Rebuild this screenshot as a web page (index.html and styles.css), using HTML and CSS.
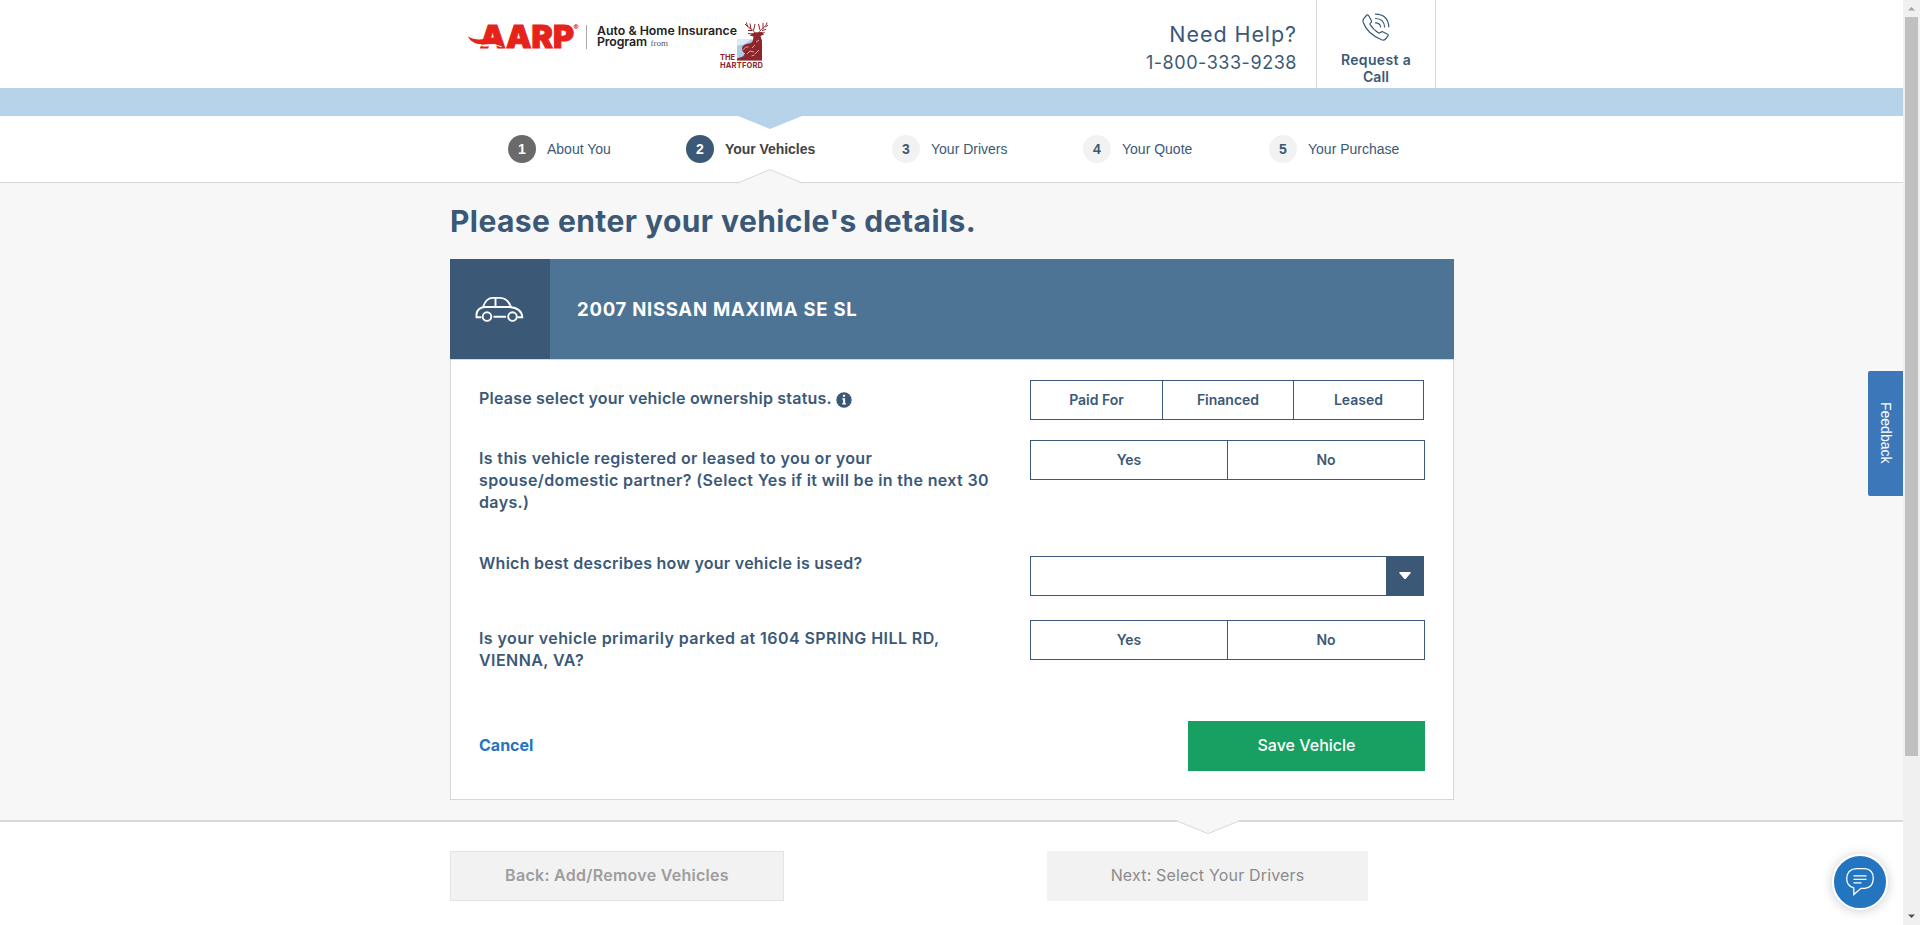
FILE: index.html
```html
<!DOCTYPE html>
<html lang="en">
<head>
<meta charset="utf-8">
<title>Your Vehicles</title>
<link rel="stylesheet" href="styles.css">
</head>
<body>
<div class="window">
  <div class="page">
    <header class="header">
      <svg class="logo" width="304" height="60" viewBox="0 0 304 60" aria-label="AARP Auto and Home Insurance Program from The Hartford">
        <text class="logo-aarp" x="12" y="32.500" textLength="94" lengthAdjust="spacingAndGlyphs">AARP</text>
        <path fill="#e6231a" d="M0 21.500C5 24.500 11 25.200 17 23.800L31 21.500L36 29.500C27 27.500 21 28 14 29C7 29.500 2 26 0 21.500Z"/>
        <path fill="#fff" d="M11 30C18 29.900 26 27.600 34 31.600L33 32.300C27 29.300 21 31.600 15 31.500Z"/>
        <circle cx="108" cy="11.500" r="2" fill="none" stroke="#e6231a" stroke-width=".7"/>
        <text class="logo-reg" x="106.800" y="12.800">R</text>
        <path stroke="#a8a8a8" d="M118.500 10v24"/>
        <text class="logo-name" x="129" y="19.700" textLength="140">Auto &amp; Home Insurance</text>
        <text class="logo-name" x="129" y="31" textLength="50">Program</text>
        <text class="logo-from" x="182.500" y="31" textLength="17.500">from</text>
        <text class="logo-hartford" x="252" y="45" textLength="15">THE</text>
        <text class="logo-hartford" x="252" y="52.500" textLength="43">HARTFORD</text>
        <path fill="#a9cde6" d="M269 24.500h25v21h-25z"/>
        <path fill="#dcebf5" d="M269 24.500h14l-7 5-7 1z"/>
        <path fill="#90262c" d="M269 43.500l6-2 2-3C273 36 273 31 277 29.500C281 28 284 29 285 25L285.500 21.500L281.500 20.500L286 17.500L294 17L296 19.500L292.500 21L294 26V45.500H269Z"/>
        <path fill="none" stroke="#e8c9c6" stroke-width=".8" d="M275.500 35c1-3 3-3 5-3M279 39l3-3 4 1M284 33l3-3M287 39l4-4M288 27l3-2M283.500 41l3-1"/>
        <path fill="none" stroke="#90262c" stroke-width="1" d="M287 18C285 13.500 279 14 278.500 7.500M280.500 12.500L277 9M283 14.500L282 8.500M285.500 15.500L287 9M291 18C292 14 298 13 299 7.500M297.500 12L300 10M295 14L295 8M292 15L290.500 9M284 15.500L280 15.500M294 15.500L298 14.500M285 19L280 18.500M293 18.500L296.500 17.500"/>
      </svg>
      <div class="help">
        <div class="help-title">Need Help?</div>
        <div class="help-phone">1-800-333-9238</div>
      </div>
      <div class="callback">
        <svg width="28" height="28" viewBox="0 0 28 28" fill="none" stroke="#3b5977" stroke-width="1.200" stroke-linejoin="round" stroke-linecap="round">
          <path d="M1.200 6.300L4.800 2Q6 1.600 6.800 3L9.300 7.500Q10 8.500 9 9.500L7.800 11Q11 16.500 17 20.200L19.500 18.900Q20.300 18.500 21.200 19L25.500 21.300Q26.700 22 25.800 23.200L23.500 26Q22 27.800 19.500 26.800Q5 20.500 1.300 9.500Q.8 7.500 1.200 6.300Z"/>
          <path d="M13.500 1.200Q26 1.500 26.800 13.800M13.500 5.500Q22 5.700 22.600 14M13.500 9.800Q18.200 9.800 18.600 14"/>
        </svg>
        <div class="callback-label">Request a<br><span>Call</span></div>
      </div>
    </header>
    <div class="band"></div>
    <nav class="steps">
      <div class="step step-1"><b class="dot done">1</b><span>About You</span></div>
      <div class="step step-2"><b class="dot current">2</b><strong>Your Vehicles</strong></div>
      <div class="step step-3"><b class="dot">3</b><span>Your Drivers</span></div>
      <div class="step step-4"><b class="dot">4</b><span>Your Quote</span></div>
      <div class="step step-5"><b class="dot">5</b><span>Your Purchase</span></div>
      <svg class="notch notch-top" width="64" height="13" viewBox="0 0 64 13"><path fill="#b7d3e9" d="M0 0H64L32 13Z"/></svg>
      <svg class="notch notch-nav" width="66" height="15" viewBox="0 0 66 15"><path fill="#f7f7f7" d="M1 15V14L33 .7L65 14V15Z"/><path fill="none" stroke="#d8d8d8" d="M0 14.200L1.500 13.700L33 .6L64.500 13.700L66 14.200"/></svg>
    </nav>
    <main class="main">
      <h1 class="title">Please enter your vehicle's details.</h1>
      <section class="card">
        <div class="card-head">
          <div class="card-icon">
            <svg width="50" height="26" viewBox="0 0 50 26" fill="none" stroke="#fff" stroke-width="1.900">
              <path d="M6.500 21.200H1.500V18Q2.500 11.500 10 11H34.500Q46.500 12 47.300 21.200H42.500M18.500 20.800H31"/>
              <path d="M8 11Q11 1.900 18 1.900H25Q32.500 2 36 11M20.500 2V11"/>
              <circle cx="12" cy="20.600" r="4.300"/><circle cx="37.500" cy="20.600" r="4.300"/>
            </svg>
          </div>
          <h2 class="card-title">2007 NISSAN MAXIMA SE SL</h2>
        </div>
        <div class="card-body">
          <div class="row row-owner">
            <div class="label tight">Please select your vehicle ownership status.<svg class="info" width="16" height="16" viewBox="0 0 16 16"><circle cx="8" cy="8" r="7.700" fill="#3b5977"/><path fill="#fff" d="M6.900 2.800h2.200v2H6.900zM6.200 6.300h2.900v5h.9v1.200H6.200v-1.200h.9V7.500h-.9z"/></svg></div>
            <div class="choices three"><button>Paid For</button><button>Financed</button><button>Leased</button></div>
          </div>
          <div class="row row-registered">
            <div class="label">Is this vehicle registered or leased to you or your<br>spouse/domestic partner? (Select Yes if it will be in the next 30<br>days.)</div>
            <div class="choices two"><button>Yes</button><button>No</button></div>
          </div>
          <div class="row row-usage">
            <div class="label usage">Which best describes how your vehicle is used?</div>
            <div class="select"><span class="arrow"><svg width="12" height="7" viewBox="0 0 12 7"><path fill="#fff" d="M1 0H11Q12.500 0 11.500 1.300L7 6.400Q6 7.400 5 6.400L.5 1.300Q-.5 0 1 0Z"/></svg></span></div>
          </div>
          <div class="row row-parked">
            <div class="label parked">Is your vehicle primarily parked at 1604 SPRING HILL RD,<br>VIENNA, VA?</div>
            <div class="choices two"><button>Yes</button><button>No</button></div>
          </div>
          <div class="actions"><a class="cancel">Cancel</a><button class="save">Save Vehicle</button></div>
        </div>
      </section>
    </main>
    <footer class="footer">
      <button class="foot-btn back">Back: Add/Remove Vehicles</button>
      <button class="foot-btn next">Next: Select Your Drivers</button>
      <svg class="notch notch-foot" width="66" height="15" viewBox="0 0 66 15"><path fill="#f7f7f7" d="M2 0H64V1.200L33 14L2 1.200Z"/><path fill="none" stroke="#d8d8d8" d="M1 .5L33 13.700L65 .5"/></svg>
    </footer>
    <div class="feedback"><span>Feedback</span></div>
    <div class="chat">
      <svg width="30" height="30" viewBox="0 0 30 30" fill="none" stroke="#fff" stroke-width="1.300"><path d="M11 1.700H20Q28.300 2.500 28.300 11.500Q28 20.500 20 21.300H16L8.800 27.500V21Q1.700 19 1.700 11.500Q2 2.500 11 1.700Z"/><path d="M8.500 8.800H21.500M8.500 12.300H21.500M8.500 15.800H16.500"/></svg>
    </div>
  </div>
  <div class="scrollbar">
    <svg width="17" height="17" viewBox="0 0 17 17"><path fill="#a3a3a3" d="M5 10.500L8.500 7L12 10.500Z"/></svg>
    <div class="thumb"></div>
    <svg width="17" height="17" viewBox="0 0 17 17"><path fill="#505050" d="M5 6.500H12L8.500 10Z"/></svg>
  </div>
</div>
</body>
</html>
```
FILE: styles.css
```css
* { box-sizing: border-box; }
body { margin: 0; font-family: Inter, "Liberation Sans", sans-serif; color: #3b5977; background: #fff; overflow: hidden; }
button { font: inherit; color: inherit; border: 0; padding: 0; border-radius: 0; background: none; white-space: nowrap; }
h1, h2 { margin: 0; }

.window { display: flex; height: 925px; }
.page { position: relative; width: 1903px; display: flex; flex-direction: column; }

.header { height: 88px; display: flex; padding-left: 468px; }
.logo { margin-top: 15px; flex: none; }
.logo-aarp { font: 900 31.500px Inter, sans-serif; fill: #e6231a; stroke: #e6231a; stroke-width: 1px; }
.logo-reg { font: 700 3.500px Inter, sans-serif; fill: #e6231a; }
.logo-name { font: 600 12.300px Inter, sans-serif; fill: #222; }
.logo-from { font: 9px "Liberation Serif", serif; fill: #555; }
.logo-hartford { font: 700 7.500px Inter, sans-serif; fill: #90262c; }
.help { width: 525px; padding-top: 21px; text-align: right; }
.help-title { font-size: 21.500px; line-height: 26px; letter-spacing: .93px; }
.help-phone { font-size: 18px; line-height: 24px; letter-spacing: .54px; padding-top: 4px; }
.callback { margin-left: 19px; width: 120px; border: solid #d8d8d8; border-width: 0 1px; display: flex; flex-direction: column; align-items: center; padding-top: 13px; }
.callback-label { margin-top: 10px; font-size: 14px; line-height: 17px; font-weight: 600; letter-spacing: .34px; text-align: center; }
.callback-label span { letter-spacing: .09px; }

.band { height: 28px; background: #b7d3e9; }
.steps { position: relative; height: 67px; border-bottom: 1px solid #d8d8d8; padding: 0 0 0 508px; display: grid; grid-template-columns: 178px 206px 191px 186px 200px; align-items: center; font: 14px/16px "Liberation Sans", Arial, sans-serif; }
.step { display: flex; align-items: center; gap: 11px; }
.step strong { color: #434343; letter-spacing: -.05px; }
.dot { width: 28px; height: 28px; border-radius: 50%; background: #f2f2f2; display: flex; align-items: center; justify-content: center; }
.done { background: #6b6969; color: #fff; }
.current { background: #3b5977; color: #fff; }
.notch { position: absolute; }
.notch-top { left: 738px; top: 0; }
.notch-nav { left: 737px; top: 53px; }

.main { height: 637px; background: #f7f7f7; padding: 17px 0 0 450px; }
.title { height: 59px; font-size: 30px; line-height: 42px; letter-spacing: .43px; }
.card { width: 1004px; height: 541px; background: #fff; }
.card-head { height: 100px; display: flex; background: #4d7395; color: #fff; }
.card-icon { width: 100px; background: #3b5977; display: flex; align-items: center; justify-content: center; }
.card-title { padding-left: 27px; font-size: 18.500px; line-height: 100px; letter-spacing: .75px; }
.card-body { height: 441px; border: 1px solid #d8d8d8; padding: 20px 28px; }
.row { display: flex; }
.row-owner { height: 60px; }
.row-registered { height: 116px; }
.row-usage { height: 64px; }
.row-parked { height: 101px; }
.label { width: 551px; padding-top: 7px; flex: none; white-space: nowrap; font-size: 16px; line-height: 22px; font-weight: 600; letter-spacing: .365px; }
.tight { letter-spacing: .215px; }
.usage { padding: 0; margin-top: -4px; letter-spacing: .27px; }
.parked { letter-spacing: .43px; }
.info { margin-left: 4px; vertical-align: -4px; }
.choices { height: 40px; flex: none; display: grid; border: 1px solid #3b5977; font-size: 14px; font-weight: 600; letter-spacing: .5px; }
.choices button { padding-bottom: 1px; }
.choices button + button { border-left: 1px solid #3b5977; }
.three { width: 394px; grid-template-columns: 131px 131px 1fr; }
.two { width: 395px; grid-template-columns: 196px 1fr; letter-spacing: -.2px; }
.select { width: 394px; height: 40px; flex: none; border: 1px solid #3b5977; display: flex; justify-content: flex-end; }
.arrow { width: 37px; padding-bottom: 1px; background: #3b5977; display: flex; align-items: center; justify-content: center; }
.actions { width: 946px; height: 50px; display: flex; justify-content: space-between; align-items: center; }
.cancel { padding-bottom: 2px; color: #2375bf; font-size: 16px; font-weight: 700; }
.save { width: 237px; height: 50px; padding-bottom: 2px; background: #17a062; color: #fff; font-size: 16px; font-weight: 500; }

.footer { position: relative; height: 105px; border-top: 2px solid #d8d8d8; padding: 29px 0 0 450px; display: flex; gap: 263px; }
.foot-btn { height: 50px; padding-bottom: 2px; background: #f2f2f2; font-size: 16px; }
.back { width: 334px; border: 1px solid #e5e5e5; color: #9d9d9d; font-weight: 600; letter-spacing: .28px; }
.next { width: 321px; color: #8b8b8b; letter-spacing: .17px; }
.notch-foot { left: 1175px; top: -2px; }

.feedback { position: absolute; left: 1868px; top: 371px; width: 35px; height: 125px; padding-bottom: 1px; background: #3c77b9; color: #fff; border-radius: 2px 0 0 2px; display: flex; align-items: center; justify-content: center; font: 14px "Liberation Sans", Arial, sans-serif; writing-mode: vertical-rl; }
.chat { position: absolute; left: 1832px; top: 854px; width: 56px; height: 56px; border-radius: 50%; border: 2px solid #fff; background: #2375bf; box-shadow: 0 1px 12px rgba(0, 0, 0, .2); display: flex; align-items: center; justify-content: center; }

.scrollbar { width: 17px; background: #f0f0f0; display: flex; flex-direction: column; }
.scrollbar svg { flex: none; }
.thumb { height: 739px; margin: 0 2px 152px; background: #c0c0c0; flex: none; }
```
